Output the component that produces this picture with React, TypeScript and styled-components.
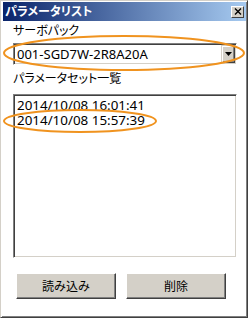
import React, { FC } from "react";
import styled, { createGlobalStyle } from "styled-components";

const GlobalStyle = createGlobalStyle`
  html, body {
    margin: 0;
    padding: 0;
    background: #ffffff;
  }
`;

const uiFont = `"Noto Sans", "Noto Sans CJK JP", sans-serif`;

const Frame = styled.div`
  position: relative;
  box-sizing: border-box;
  width: 248px;
  height: 318px;
  display: flex;
  flex-direction: column;
  background: #ffffff;
  border: 1px solid;
  border-color: #d4d0c8 #404040 #404040 #d4d0c8;
  box-shadow: inset 1px 1px #ffffff, inset -1px -1px #808080;
  padding: 1px 1px 1px 2px;
  font-family: ${uiFont};
  font-feature-settings: "palt";
`;

const TitleBar = styled.div`
  height: 19px;
  flex: none;
  display: flex;
  align-items: center;
  justify-content: space-between;
  padding: 0 2px 0 2px;
  background: linear-gradient(to right, #0a246a, #a6caf0);
`;

const Title = styled.span`
  color: #ffffff;
  font-size: 12px;
  font-weight: bold;
  line-height: 19px;
`;

const CloseButton = styled.div`
  box-sizing: border-box;
  width: 13px;
  height: 12px;
  display: flex;
  align-items: center;
  justify-content: center;
  background: #d4d0c8;
  border: 1px solid;
  border-color: #ffffff #404040 #404040 #ffffff;
`;

const Content = styled.div`
  flex: 1;
  display: flex;
  flex-direction: column;
  padding: 2px 9px 0 10px;
`;

const Label = styled.div<{ $top?: number }>`
  margin-top: ${({ $top }) => $top ?? 0}px;
  font-size: 12px;
  line-height: 16px;
  color: #000000;
`;

const Combo = styled.div`
  box-sizing: border-box;
  margin-top: 4px;
  height: 22px;
  display: flex;
  align-items: stretch;
  background: #ffffff;
  border: 1px solid;
  border-color: #808080 #ffffff #ffffff #808080;
  box-shadow: inset 1px 1px #404040, inset -1px -1px #d4d0c8;
  padding: 1px;
`;

const ComboText = styled.div`
  flex: 1;
  font-size: 13px;
  line-height: 18px;
  padding-left: 2px;
  color: #000000;
`;

const DropButton = styled.div`
  box-sizing: border-box;
  width: 14px;
  display: flex;
  align-items: center;
  justify-content: center;
  background: #d4d0c8;
  border: 1px solid;
  border-color: #d4d0c8 #404040 #404040 #d4d0c8;
  box-shadow: inset 1px 1px #ffffff, inset -1px -1px #808080;
`;

const ListBox = styled.div`
  box-sizing: border-box;
  margin-top: 7px;
  height: 164px;
  background: #ffffff;
  border: 1px solid;
  border-color: #808080 #ffffff #ffffff #808080;
  box-shadow: inset 1px 1px #404040, inset -1px -1px #d4d0c8;
  padding: 3px 3px;
`;

const ListItem = styled.div`
  font-size: 13.4px;
  line-height: 15px;
  color: #000000;
`;

const ButtonRow = styled.div`
  display: flex;
  gap: 10px;
  margin-top: 15px;
  padding-left: 3px;
`;

const Button = styled.button`
  box-sizing: border-box;
  width: 100px;
  height: 26px;
  padding: 0;
  background: #d4d0c8;
  border: 1px solid;
  border-color: #ffffff #404040 #404040 #ffffff;
  box-shadow: inset -1px -1px #808080;
  font-family: ${uiFont};
  font-size: 12px;
  color: #000000;
`;

const Marks = styled.svg`
  position: absolute;
  left: 0;
  top: 0;
  pointer-events: none;
`;

const App: FC = () => {
  return (
    <>
      <GlobalStyle />
      <Frame>
        <TitleBar>
          <Title>パラメータリスト</Title>
          <CloseButton>
            <svg width="8" height="7" viewBox="0 0 8 7">
              <path d="M1 0.5 L7 6.5 M7 0.5 L1 6.5" stroke="#000" strokeWidth="1.4" />
            </svg>
          </CloseButton>
        </TitleBar>
        <Content>
          <Label>サーボパック</Label>
          <Combo>
            <ComboText>001-SGD7W-2R8A20A</ComboText>
            <DropButton>
              <svg width="7" height="4" viewBox="0 0 7 4">
                <path d="M0 0 H7 L3.5 4 Z" fill="#000" />
              </svg>
            </DropButton>
          </Combo>
          <Label $top={6}>パラメータセット一覧</Label>
          <ListBox>
            <ListItem>2014/10/08 16:01:41</ListItem>
            <ListItem>2014/10/08 15:57:39</ListItem>
          </ListBox>
          <ButtonRow>
            <Button>読み込み</Button>
            <Button>削除</Button>
          </ButtonRow>
        </Content>
        <Marks width="248" height="318" viewBox="0 0 248 318">
          <ellipse cx="123" cy="52" rx="120" ry="17" fill="none" stroke="#f0931f" strokeWidth="2" />
          <ellipse cx="79" cy="120" rx="76" ry="11" fill="none" stroke="#f0931f" strokeWidth="2" />
        </Marks>
      </Frame>
    </>
  );
};

export default App;
